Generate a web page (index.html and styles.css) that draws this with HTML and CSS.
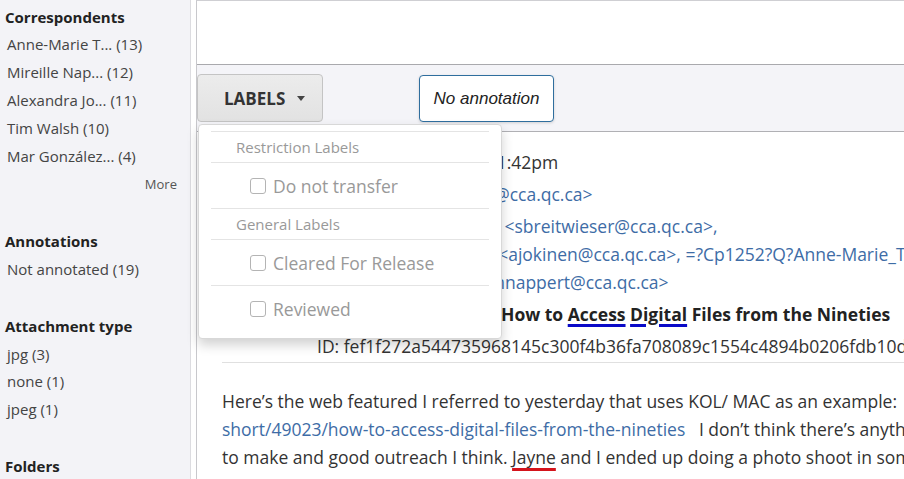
FILE: index.html
```html
<!DOCTYPE html>
<html lang="en">
<head>
<meta charset="utf-8">
<title>Message</title>
<link rel="stylesheet" href="styles.css">
</head>
<body>
<div class="app">
  <aside class="sidebar">
    <section class="facet">
      <h3>Correspondents</h3>
      <ul>
        <li>Anne-Marie T... (13)</li>
        <li>Mireille Nap... (12)</li>
        <li>Alexandra Jo... (11)</li>
        <li>Tim Walsh (10)</li>
        <li>Mar González... (4)</li>
      </ul>
      <div class="more">More</div>
    </section>
    <section class="facet">
      <h3>Annotations</h3>
      <ul>
        <li>Not annotated (19)</li>
      </ul>
    </section>
    <section class="facet">
      <h3>Attachment type</h3>
      <ul>
        <li>jpg (3)</li>
        <li>none (1)</li>
        <li>jpeg (1)</li>
      </ul>
    </section>
    <section class="facet">
      <h3>Folders</h3>
    </section>
  </aside>

  <main class="main">
    <div class="topbar"></div>
    <div class="toolbar">
      <div class="labels-wrap">
        <button class="btn-labels">LABELS <span class="caret"></span></button>
        <div class="dropdown">
          <div class="divider"></div>
          <div class="dd-header">Restriction Labels</div>
          <div class="divider"></div>
          <label class="dd-item"><span class="box"></span>Do not transfer</label>
          <div class="divider"></div>
          <div class="dd-header">General Labels</div>
          <div class="divider"></div>
          <label class="dd-item"><span class="box"></span>Cleared For Release</label>
          <div class="divider"></div>
          <label class="dd-item"><span class="box"></span>Reviewed</label>
        </div>
      </div>
      <div class="annotation">No annotation</div>
    </div>

    <div class="message">
      <div class="headers">
        <div class="lbl">Date:</div>
        <div class="val">Wed, Jan 13, 2016 at 11:42pm</div>
        <div class="lbl">From:</div>
        <div class="val link">Tim Walsh &lt;tim.walsh@cca.qc.ca&gt;</div>
        <div class="lbl">To:</div>
        <div class="val link">Stephanie Breitwieser&nbsp; &lt;sbreitwieser@cca.qc.ca&gt;,<br>Alexandra M. Jokinen&nbsp; &lt;ajokinen@cca.qc.ca&gt;, =?Cp1252?Q?Anne-Marie_Tremblay?= &lt;amtremblay@cca.qc.ca&gt;,<br>Mireille M. Nappert &lt;mnappert@cca.qc.ca&gt;</div>
        <div class="lbl">Subject:</div>
        <div class="val subject">Fwd: KOL Features &amp; How to <span class="ent-blue">Access</span> <span class="ent-blue">Digital</span> Files from the Nineties</div>
        <div class="lbl"></div>
        <div class="val">ID: fef1f272a544735968145c300f4b36fa708089c1554c4894b0206fdb10d3a1e7</div>
      </div>
      <div class="sep"></div>
      <div class="body">
        Here’s the web featured I referred to yesterday that uses KOL/ MAC as an example:<br>
        <a class="blink">short/49023/how-to-access-digital-files-from-the-nineties</a>&nbsp;&nbsp; I don’t think there’s anything we need to worry about, it was a lot of work<br>
        to make and good outreach I think. <span class="ent-red">Jayne</span> and I ended up doing a photo shoot in some of the storage rooms.
      </div>
    </div>
  </main>
</div>
</body>
</html>
```

FILE: styles.css
```css
* {
  box-sizing: border-box;
  margin: 0;
  padding: 0;
}

html, body {
  width: 904px;
  height: 479px;
  overflow: hidden;
  background: #fff;
}

body {
  font-family: "Open Sans", "DejaVu Sans", sans-serif;
  color: #333;
}

.app {
  display: flex;
  height: 479px;
}

/* Sidebar */
.sidebar {
  width: 191px;
  flex: none;
  background: #f3f3f7;
  border-right: 1px solid #dcdce0;
  padding: 3.5px 13px 0 5px;
}

.facet {
  margin-bottom: 29px;
}

.facet h3 {
  font-size: 15px;
  font-weight: 700;
  line-height: 27.9px;
  color: #222;
}

.facet ul {
  list-style: none;
}

.facet li {
  font-size: 15px;
  line-height: 27.9px;
  color: #444;
  padding-left: 2px;
  white-space: nowrap;
}

.more {
  font-size: 13px;
  line-height: 27.9px;
  color: #555;
  text-align: right;
}

/* Main */
.main {
  flex: 1;
  min-width: 0;
  margin-left: 5px;
  border-left: 1px solid #c8c8cc;
  border-top: 1px solid #cfcfd3;
  position: relative;
}

.topbar {
  height: 64px;
  background: #fff;
  border-bottom: 1px solid #a9a9ad;
}

.toolbar {
  height: 67px;
  background: #f4f4f8;
  border-bottom: 1px solid #b0b0b4;
  display: flex;
  align-items: flex-start;
  gap: 96px;
}

.labels-wrap {
  position: relative;
  margin-top: 9px;
}

.btn-labels {
  display: flex;
  align-items: center;
  width: 126px;
  height: 48px;
  padding-left: 26px;
  font-family: "Open Sans", sans-serif;
  font-size: 17px;
  font-weight: 700;
  color: #333;
  background: linear-gradient(#ececec, #e2e2e2);
  border: 1px solid #c4c4c4;
  border-radius: 4px;
}

.caret {
  display: inline-block;
  width: 0;
  height: 0;
  margin-left: 12px;
  border-top: 5px solid #444;
  border-left: 4px solid transparent;
  border-right: 4px solid transparent;
}

.annotation {
  margin-top: 10px;
  height: 47px;
  width: 135px;
  display: flex;
  align-items: center;
  justify-content: center;
  font-family: "Liberation Sans", Arial, sans-serif;
  font-style: italic;
  font-size: 17px;
  color: #222;
  background: #fff;
  border: 1px solid #2f6e9e;
  border-radius: 4px;
  box-shadow: 0 1px 3px rgba(0, 0, 0, 0.15);
}

/* Dropdown */
.dropdown {
  position: absolute;
  top: 50px;
  left: 1px;
  width: 304px;
  z-index: 10;
  background: #fff;
  border: 1px solid #d8d8d8;
  border-radius: 4px;
  box-shadow: 0 6px 12px rgba(0, 0, 0, 0.18);
  padding: 6px 0 6.5px;
}

.divider {
  height: 1px;
  margin: 0 12px;
  background: #e4e4e4;
}

.dd-header {
  height: 30px;
  line-height: 31px;
  padding-left: 37px;
  font-size: 15px;
  color: #999;
}

.dd-item {
  display: flex;
  align-items: center;
  height: 45px;
  padding-left: 51px;
  font-size: 17.5px;
  color: #999;
}

.box {
  width: 16px;
  height: 16px;
  margin-right: 7px;
  border: 1px solid #b4b4b4;
  border-radius: 3px;
  background: #fff;
}

/* Message */
.message {
  padding: 14px 0 0 25px;
}

.headers {
  display: grid;
  grid-template-columns: 95px max-content;
  white-space: nowrap;
}

.lbl,
.val {
  padding: 2px 0;
  font-size: 17.5px;
  line-height: 28px;
  color: #333;
}

.link {
  color: #3e6ca6;
}

.subject {
  font-weight: 700;
  color: #222;
}

.ent-blue {
  text-decoration: underline 3px #0a0ac8;
  text-underline-offset: 3px;
}

.ent-red {
  text-decoration: underline 3px #d4141c;
  text-underline-offset: 4px;
}

.sep {
  height: 1px;
  background: #e0e0e0;
}

.body {
  margin-top: 24px;
  font-size: 17.5px;
  line-height: 28px;
  color: #333;
  white-space: nowrap;
}

.blink {
  color: #3e6ca6;
}
```
